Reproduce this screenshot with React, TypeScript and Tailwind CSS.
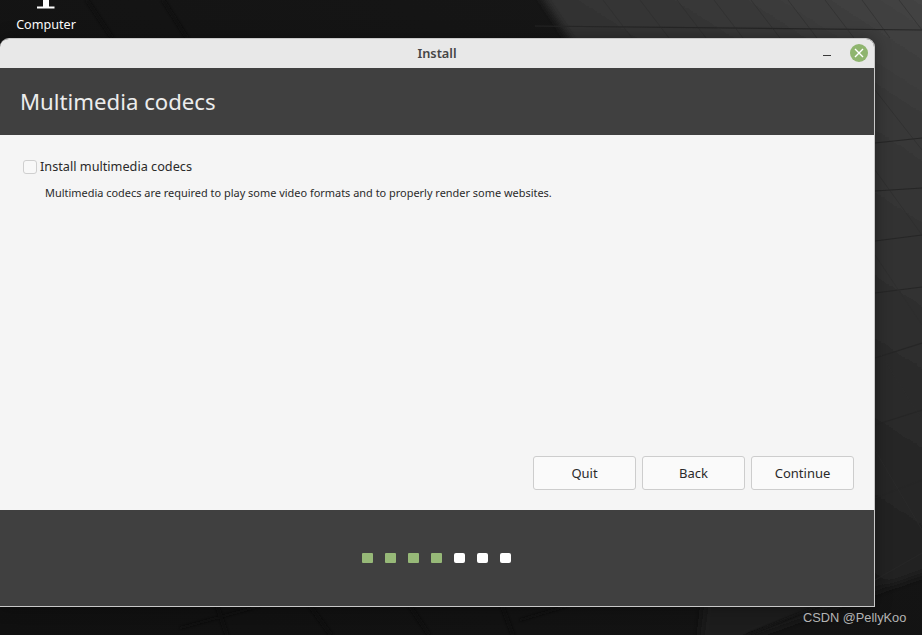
export default function App() {
  const dots = ["g", "g", "g", "g", "w", "w", "w"];
  return (
    <div className="relative w-[922px] h-[635px] overflow-hidden bg-[#141414] font-['Noto_Sans',sans-serif]">
      <svg className="absolute inset-0" width="922" height="635" viewBox="0 0 922 635">
        <defs>
          <linearGradient id="wall" gradientUnits="userSpaceOnUse" x1="500" y1="650" x2="922" y2="0">
            <stop offset="0.3" stopColor="#1c1c1c" />
            <stop offset="0.38" stopColor="#222222" />
            <stop offset="0.567" stopColor="#2b2b2b" />
            <stop offset="0.86" stopColor="#383838" />
            <stop offset="1" stopColor="#444444" />
          </linearGradient>
          <linearGradient id="dark" x1="0" y1="1" x2="1" y2="0">
            <stop offset="0" stopColor="#101010" />
            <stop offset="1" stopColor="#171717" />
          </linearGradient>
          <filter id="soft"><feGaussianBlur stdDeviation="1" /></filter>
          <filter id="softer" x="-10%" y="-10%" width="120%" height="120%"><feGaussianBlur stdDeviation="4" /></filter>
        </defs>
        <rect width="922" height="635" fill="url(#dark)" />
        <path d="M518 -40H980V553L740 640H700L740 300Z" fill="url(#wall)" filter="url(#softer)" />
        <g stroke="#0a0a0a" strokeWidth="4" fill="none" opacity="0.55" filter="url(#soft)">
          <path d="M87 0L112 38M163 0L187 38" />
          <path d="M217 606L227 635M310 606L331 635M410 606L429 635M502 606L513 635" />
          <path d="M180 628L260 606M520 620L567 606M747 635L813 608L873 582" strokeWidth="2.5" />
        </g>
        <g stroke="#262626" strokeWidth="1.2" fill="none">
          <path d="M535 26L922 30" />
          <path d="M875 143L922 138M875 191L922 188M875 241L922 235M875 293L922 287M875 358L922 343M875 425L922 410M875 498L922 480M875 580L922 553" />
        </g>
        <g stroke="#2c2c2c" strokeWidth="0.8" fill="none" opacity="0.7">
          <path d="M603 0L632 38M640 0L669 38M677 0L706 38M714 0L743 38M751 0L780 38M788 0L817 38M825 0L854 38M862 0L890 38M899 0L922 30" />
          <path d="M875 90L922 150M875 170L922 235M875 255L922 325M875 345L922 420M875 450L922 530" />
        </g>
      </svg>

      <div className="absolute left-0 top-0 w-[92px] flex flex-col items-center">
        <svg width="20" height="9" viewBox="0 0 20 9" className="block">
          <path d="M7 0H13V6.5H18.5V8.5H1V6.5H7Z" fill="#fff" />
        </svg>
        <span className="mt-[8px] text-[12.6px] leading-[16px] text-white">Computer</span>
      </div>

      <div className="absolute left-0 top-[38px] w-[875px] h-[569px] flex flex-col rounded-t-[9px] border-r border-b border-t border-[#c8c8c8] overflow-hidden shadow-[0_0_16px_rgba(0,0,0,0.35)]">
        <div className="relative h-[29px] shrink-0 flex items-center justify-center bg-[#e8e8e8]">
          <span className="text-[12.8px] font-semibold text-[#454545]">Install</span>
          <span className="absolute left-[823px] top-[16px] w-[8px] h-px bg-[#3a3a3a]" />
          <span className="absolute left-[850px] top-[5px] w-[18px] h-[18px] rounded-full bg-[#8fb56f] flex items-center justify-center">
            <svg width="10" height="10" viewBox="0 0 10 10">
              <path d="M1 1L9 9M9 1L1 9" stroke="#fff" strokeWidth="1.4" />
            </svg>
          </span>
        </div>

        <div className="h-[67px] shrink-0 flex items-center px-5 bg-[#404040]">
          <h1 className="text-[22.2px] font-normal text-[#ececec]">Multimedia codecs</h1>
        </div>

        <div className="flex-1 flex flex-col bg-[#f5f5f5] pl-[23px] pr-5 pt-6 pb-5">
          <label className="flex items-center gap-[3px] h-[16px]">
            <span className="w-[14px] h-[14px] rounded-[3px] border border-[#cfcfcf] bg-[#f8f8f8]" />
            <span className="text-[12.7px] text-[#2a2a2a]">Install multimedia codecs</span>
          </label>
          <p className="ml-[22px] mt-[11px] text-[10.95px] leading-[14px] text-[#2a2a2a]">
            Multimedia codecs are required to play some video formats and to properly render some websites.
          </p>
          <div className="mt-auto flex justify-end gap-[6px]">
            {["Quit", "Back", "Continue"].map((b) => (
              <button
                key={b}
                className="w-[103px] h-[34px] pt-[2px] rounded-[3px] border border-[#cdcdcd] bg-[#fafafa] text-[13px] text-[#2a2a2a]"
              >
                {b}
              </button>
            ))}
          </div>
        </div>

        <div className="h-[96px] shrink-0 flex items-center justify-center gap-[12px] pr-[2px] bg-[#404040]">
          {dots.map((d, i) => (
            <span
              key={i}
              className={d === "g" ? "w-[11px] h-[10px] rounded-[1px] bg-[#97b978]" : "w-[11px] h-[10px] rounded-[2px] bg-white"}
            />
          ))}
        </div>
      </div>

      <span className="absolute left-[803px] top-[609px] font-['Liberation_Sans',sans-serif] text-[12.8px] leading-[17px] text-[#b4b4b4]">
        CSDN @PellyKoo
      </span>
    </div>
  );
}
